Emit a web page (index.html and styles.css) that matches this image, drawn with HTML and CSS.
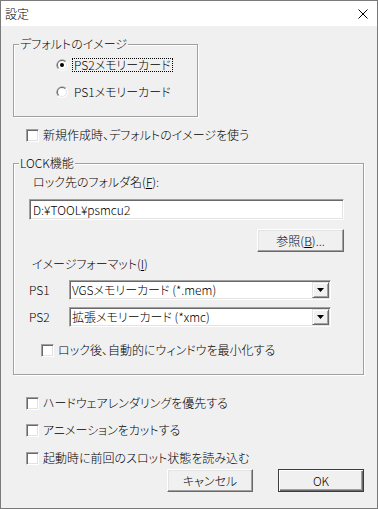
FILE: index.html
```html
<!DOCTYPE html>
<html lang="ja">
<head>
<meta charset="utf-8">
<title>設定</title>
<link rel="stylesheet" href="styles.css">
</head>
<body>
<div class="window">
  <div class="titlebar">
    <span class="title">設定</span>
    <svg class="close" width="10" height="10" viewBox="0 0 10 10"><path d="M0.5 0.5 L9.5 9.5 M9.5 0.5 L0.5 9.5" stroke="#000" stroke-width="1" fill="none"/></svg>
  </div>
  <div class="client">
    <fieldset class="group g1">
      <legend>デフォルトのイメージ</legend>
      <div class="g1-body">
        <div class="radio-row">
          <svg class="radio" width="12" height="12" viewBox="0 0 12 12">
            <circle cx="6" cy="6" r="6" fill="#fff"/>
            <path d="M1.76 10.24 A6 6 0 0 1 10.24 1.76 Z" fill="#a0a0a0"/>
            <circle cx="6" cy="6" r="5" fill="#e3e3e3"/>
            <path d="M2.46 9.54 A5 5 0 0 1 9.54 2.46 Z" fill="#696969"/>
            <circle cx="6" cy="6" r="4" fill="#fff"/>
            <circle cx="6" cy="6" r="2" fill="#000"/>
          </svg>
          <span class="rlabel focus">PS2メモリーカード</span>
        </div>
        <div class="radio-row">
          <svg class="radio" width="12" height="12" viewBox="0 0 12 12">
            <circle cx="6" cy="6" r="6" fill="#fff"/>
            <path d="M1.76 10.24 A6 6 0 0 1 10.24 1.76 Z" fill="#a0a0a0"/>
            <circle cx="6" cy="6" r="5" fill="#e3e3e3"/>
            <path d="M2.46 9.54 A5 5 0 0 1 9.54 2.46 Z" fill="#696969"/>
            <circle cx="6" cy="6" r="4" fill="#fff"/>
          </svg>
          <span class="rlabel">PS1メモリーカード</span>
        </div>
      </div>
    </fieldset>

    <div class="check-row c-default"><span class="cb"></span><span>新規作成時、デフォルトのイメージを使う</span></div>

    <fieldset class="group g2">
      <legend>LOCK機能</legend>
      <div class="g2-body">
        <div class="lbl-folder">ロック先のフォルダ名(<u>F</u>):</div>
        <div class="edit">D:¥TOOL¥psmcu2</div>
        <div class="browse-row"><button class="btn browse">参照(<u>B</u>)...</button></div>
        <div class="lbl-format">イメージフォーマット(<u>I</u>)</div>
        <div class="combo-row r1">
          <span class="combo-lbl">PS1</span>
          <div class="combo">
            <span class="combo-val">VGSメモリーカード (*.mem)</span>
            <span class="combo-btn"><svg width="7" height="4" viewBox="0 0 7 4"><path d="M0 0 H7 L3.5 4 Z" fill="#000"/></svg></span>
          </div>
        </div>
        <div class="combo-row r2">
          <span class="combo-lbl">PS2</span>
          <div class="combo">
            <span class="combo-val">拡張メモリーカード (*xmc)</span>
            <span class="combo-btn"><svg width="7" height="4" viewBox="0 0 7 4"><path d="M0 0 H7 L3.5 4 Z" fill="#000"/></svg></span>
          </div>
        </div>
        <div class="check-row c-lock"><span class="cb"></span><span>ロック後、自動的にウィンドウを最小化する</span></div>
      </div>
    </fieldset>

    <div class="check-row c-b1"><span class="cb"></span><span>ハードウェアレンダリングを優先する</span></div>
    <div class="check-row c-b2"><span class="cb"></span><span>アニメーションをカットする</span></div>
    <div class="check-row c-b3"><span class="cb"></span><span>起動時に前回のスロット状態を読み込む</span></div>

    <div class="buttons">
      <button class="btn">キャンセル</button>
      <button class="btn default">OK</button>
    </div>
  </div>
</div>
</body>
</html>
```
FILE: styles.css
```css
html, body {
  margin: 0;
  padding: 0;
  background: #f0f0f0;
}
body {
  font-family: "Noto Sans CJK JP", "Noto Sans", sans-serif;
  font-size: 12px;
  font-weight: 300;
  line-height: 14px;
  color: #000;
  font-feature-settings: "palt";
}
u { text-decoration: underline; text-underline-offset: 1px; }

.window {
  width: 378px;
  height: 509px;
  box-sizing: border-box;
  border: 1px solid #7a7a7a;
  display: flex;
  flex-direction: column;
  background: #f0f0f0;
}
.titlebar {
  height: 25px;
  flex: none;
  background: #fff;
  display: flex;
  align-items: center;
  justify-content: space-between;
  padding: 0 9px 0 4px;
}
.title { font-size: 12px; }
.close { display: block; }

.client {
  flex: 1;
  display: flex;
  flex-direction: column;
  align-items: flex-start;
  background: #f0f0f0;
}

.group {
  margin: 0 0 0 12px;
  padding: 0;
  border: 1px solid #a0a0a0;
  box-shadow: inset 1px 1px 0 #fff, 1px 1px 0 #fff;
  min-inline-size: 0;
  box-sizing: border-box;
}
.group legend {
  margin-left: 5px;
  padding: 0 1px;
  background: #f0f0f0;
  line-height: 14px;
}
.g1 { margin-top: 11px; width: 185px; }
.g1-body {
  padding: 7px 0 17px 42px;
  display: flex;
  flex-direction: column;
  gap: 13px;
}
.radio-row {
  display: flex;
  align-items: center;
  height: 14px;
}
.radio { display: block; margin-right: 4px; flex: none; }
.rlabel {
  display: inline-block;
  line-height: 12px;
  padding: 0 1px;
  border: 1px solid transparent;
}
.rlabel.focus { border: 1px dotted #000; }

.check-row {
  display: flex;
  align-items: center;
  gap: 4px;
  height: 14px;
}
.cb {
  width: 13px;
  height: 13px;
  flex: none;
  box-sizing: border-box;
  background: #fff;
  border: 1px solid;
  border-color: #a0a0a0 #fff #fff #a0a0a0;
  box-shadow: inset 1px 1px 0 #696969, inset -1px -1px 0 #e3e3e3;
}
.c-default { margin: 11px 0 0 25px; }

.g2 { margin-top: 14px; width: 351px; }
.g2-body {
  padding: 5px 0 17px 15px;
  display: flex;
  flex-direction: column;
  align-items: flex-start;
}
.lbl-folder { margin-left: 4px; }
.edit {
  margin-top: 10px;
  width: 315px;
  height: 21px;
  box-sizing: border-box;
  background: #fff;
  border: 1px solid;
  border-color: #a0a0a0 #fff #fff #a0a0a0;
  box-shadow: inset 1px 1px 0 #696969, inset -1px -1px 0 #e3e3e3;
  padding-left: 3px;
  display: flex;
  align-items: center;
}
.browse-row {
  width: 315px;
  margin-top: 9px;
  display: flex;
  justify-content: flex-end;
}
.btn {
  font: inherit;
  font-feature-settings: "palt";
  color: #000;
  width: 86px;
  height: 23px;
  padding: 0;
  margin: 0;
  box-sizing: border-box;
  background: #f0f0f0;
  border: 1px solid;
  border-color: #fff #696969 #696969 #fff;
  box-shadow: inset -1px -1px 0 #a0a0a0, inset 1px 1px 0 #e3e3e3;
  display: flex;
  align-items: center;
  justify-content: center;
}
.btn.browse { width: 87px; }
.btn.default {
  border: 1px solid #3c3c3c;
  box-shadow: inset 1px 1px 0 #fff, inset -1px -1px 0 #696969, inset -2px -2px 0 #a0a0a0;
}
.lbl-format { margin-top: 5px; margin-left: 3px; }
.combo-row {
  display: flex;
  align-items: center;
}
.combo-row.r1 { margin-top: 9px; }
.combo-row.r2 { margin-top: 7px; }
.combo-lbl { width: 40px; flex: none; }
.combo {
  width: 262px;
  height: 20px;
  box-sizing: border-box;
  background: #fff;
  border: 1px solid;
  border-color: #a0a0a0 #fff #fff #a0a0a0;
  box-shadow: inset 1px 1px 0 #696969, inset -1px -1px 0 #e3e3e3;
  padding: 1px;
  display: flex;
}
.combo-val {
  flex: 1;
  line-height: 16px;
  padding-left: 1px;
  white-space: nowrap;
}
.combo-btn {
  width: 17px;
  height: 16px;
  box-sizing: border-box;
  background: #f0f0f0;
  border: 1px solid;
  border-color: #e3e3e3 #696969 #696969 #e3e3e3;
  box-shadow: inset 1px 1px 0 #fff, inset -1px -1px 0 #a0a0a0;
  display: flex;
  align-items: center;
  justify-content: center;
}
.combo-btn svg { display: block; }
.c-lock { margin: 16px 0 0 12px; }

.c-b1 { margin: 21px 0 0 25px; }
.c-b2 { margin: 13px 0 0 25px; }
.c-b3 { margin: 14px 0 0 25px; }

.buttons {
  align-self: stretch;
  margin-top: 4px;
  padding-right: 13px;
  display: flex;
  justify-content: flex-end;
  gap: 25px;
}
```
